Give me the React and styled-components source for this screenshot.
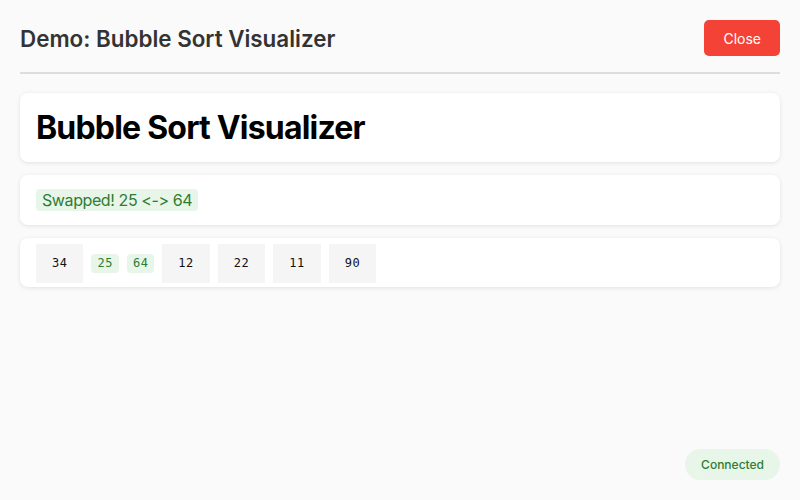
import React from 'react'
import styled, { createGlobalStyle } from 'styled-components'

const GlobalStyle = createGlobalStyle`
  html, body {
    margin: 0;
    padding: 0;
    background: #fafafa;
    font-family: Inter, "Noto Sans", "Liberation Sans", sans-serif;
    font-variant-ligatures: none;
    font-feature-settings: "calt" 0, "liga" 0;
  }
`

const Page = styled.div`
  width: 800px;
  height: 500px;
  box-sizing: border-box;
  padding: 20px;
  display: flex;
  flex-direction: column;
  position: relative;
`

const Header = styled.div`
  display: flex;
  justify-content: space-between;
  align-items: center;
  padding-bottom: 16px;
  border-bottom: 2px solid #dddddd;
  margin-bottom: 19px;
`

const HeaderTitle = styled.h2`
  margin: 0;
  font-size: 22.4px;
  font-weight: 600;
  color: #333333;
`

const CloseButton = styled.button`
  border: none;
  background: #f44336;
  color: #ffffff;
  font-family: inherit;
  font-size: 14px;
  height: 36px;
  padding: 0 19px;
  border-radius: 5px;
  cursor: pointer;
`

const Stack = styled.div`
  display: flex;
  flex-direction: column;
  gap: 13px;
`

const Card = styled.div`
  background: #ffffff;
  border-radius: 8px;
  box-shadow: 0 1px 4px rgba(0, 0, 0, 0.1);
  padding: ${p => p.$pad || '16px'};
`

const Title = styled.h1`
  margin: 0;
  font-size: 32px;
  font-weight: 700;
  line-height: 37px;
  letter-spacing: -0.8px;
  color: #000000;
`

const Status = styled.span`
  display: inline-block;
  background: #e8f5e9;
  color: #2e7d32;
  font-size: 16px;
  line-height: 18px;
  letter-spacing: -0.4px;
  padding: 2px 6px;
  border-radius: 4px;
`

const Row = styled.div`
  display: flex;
  align-items: center;
  gap: 8px;
`

const Cell = styled.span`
  font-family: "DejaVu Sans Mono", "Liberation Mono", monospace;
  font-size: 12px;
  line-height: 15px;
  letter-spacing: 0.5px;
  color: ${p => (p.$hot ? '#2e7d32' : '#111111')};
  background: ${p => (p.$hot ? '#e8f5e9' : '#f5f5f5')};
  padding: ${p => (p.$hot ? '2px 6px' : '12px 16px')};
  border-radius: ${p => (p.$hot ? '4px' : '0')};
`

const Connected = styled.div`
  position: absolute;
  right: 20px;
  bottom: 20px;
  background: #e8f5e9;
  color: #2e7d32;
  font-size: 12px;
  font-weight: 500;
  line-height: 15px;
  padding: 8px 16px;
  border-radius: 16px;
`

const values = [34, 25, 64, 12, 22, 11, 90]
const swapped = [1, 2]

export default function App() {
  return (
    <>
      <GlobalStyle />
      <Page>
        <Header>
          <HeaderTitle>Demo: Bubble Sort Visualizer</HeaderTitle>
          <CloseButton>Close</CloseButton>
        </Header>
        <Stack>
          <Card>
            <Title>Bubble Sort Visualizer</Title>
          </Card>
          <Card $pad="14px 16px">
            <Status>Swapped! 25 &lt;-&gt; 64</Status>
          </Card>
          <Card $pad="6px 16px 4px">
            <Row>
              {values.map((v, i) => (
                <Cell key={i} $hot={swapped.includes(i)}>{v}</Cell>
              ))}
            </Row>
          </Card>
        </Stack>
        <Connected>Connected</Connected>
      </Page>
    </>
  )
}
